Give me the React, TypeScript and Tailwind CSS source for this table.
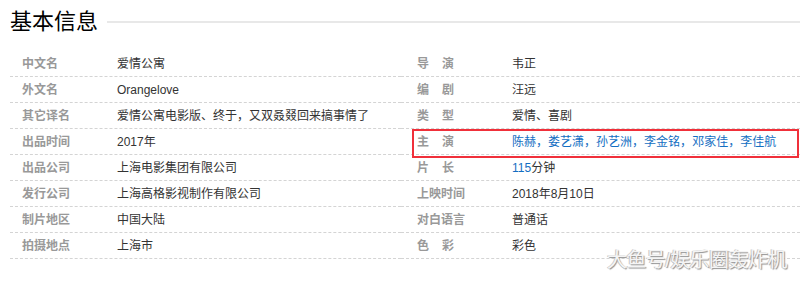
import React from "react";

type Cell = { label: React.ReactNode; value: React.ReactNode };

const blue = "text-[#136ec2]";

const left: Cell[] = [
  { label: "中文名", value: "爱情公寓" },
  { label: "外文名", value: "Orangelove" },
  { label: "其它译名", value: "爱情公寓电影版、终于，又双叒叕回来搞事情了" },
  { label: "出品时间", value: "2017年" },
  { label: "出品公司", value: "上海电影集团有限公司" },
  { label: "发行公司", value: "上海高格影视制作有限公司" },
  { label: "制片地区", value: "中国大陆" },
  { label: "拍摄地点", value: "上海市" },
];

function Spaced({ a, b }: { a: string; b: string }) {
  return (
    <span className="flex">
      <span>{a}</span>
      <span className="ml-[13px]">{b}</span>
    </span>
  );
}

const actors = ["陈赫", "娄艺潇", "孙艺洲", "李金铭", "邓家佳", "李佳航"];

const right: Cell[] = [
  { label: <Spaced a="导" b="演" />, value: "韦正" },
  { label: <Spaced a="编" b="剧" />, value: "汪远" },
  { label: <Spaced a="类" b="型" />, value: "爱情、喜剧" },
  {
    label: <Spaced a="主" b="演" />,
    value: (
      <span className={blue}>
        {actors.map((n, i) => (
          <React.Fragment key={n}>
            {n}
            {i < actors.length - 1 && "，"}
          </React.Fragment>
        ))}
      </span>
    ),
  },
  {
    label: <Spaced a="片" b="长" />,
    value: (
      <span>
        <span className={blue}>115</span>分钟
      </span>
    ),
  },
  { label: "上映时间", value: "2018年8月10日" },
  { label: "对白语言", value: "普通话" },
  { label: <Spaced a="色" b="彩" />, value: "彩色" },
];

function Column({ rows, pad, labelW }: { rows: Cell[]; pad: string; labelW: string }) {
  return (
    <div className="flex flex-col">
      {rows.map((r, i) => (
        <div key={i} className="flex h-[26px] items-center border-b border-dashed border-[#d4d4d4]">
          <div className={`${pad} ${labelW} shrink-0 font-bold text-[#999]`}>{r.label}</div>
          <div className="text-[#333] whitespace-nowrap">{r.value}</div>
        </div>
      ))}
    </div>
  );
}

export default function App() {
  return (
    <div
      className="relative w-[802px] h-[285px] bg-white pl-[10px] pr-[2px] text-[12px] overflow-hidden"
      style={{ fontFamily: '"Liberation Sans", "Noto Sans CJK SC", sans-serif' }}
    >
      <div className="flex h-[44px] items-center">
        <h2 className="text-[22px] leading-none text-black">基本信息</h2>
        <div className="ml-[9px] h-[2px] flex-1 bg-[#e8e8e8]" />
      </div>
      <div className="mt-[7px] grid grid-cols-[391px_1fr]">
        <Column rows={left} pad="pl-[12px]" labelW="w-[107px]" />
        <Column rows={right} pad="pl-[16px]" labelW="w-[111px]" />
      </div>

      {/* highlight round the cast row */}
      <div className="absolute left-[412px] top-[129px] h-[29px] w-[387px] border-2 border-[#f0303a]" />

      <div className="absolute left-[607px] top-[250px] text-[20px] leading-none tracking-[-0.6px] text-[#f4f4f4] [text-shadow:1px_1px_1px_#8f8f8f,-1px_0_0_#c8c8c8]">
        大鱼号/娱乐圈轰炸机
      </div>
    </div>
  );
}
